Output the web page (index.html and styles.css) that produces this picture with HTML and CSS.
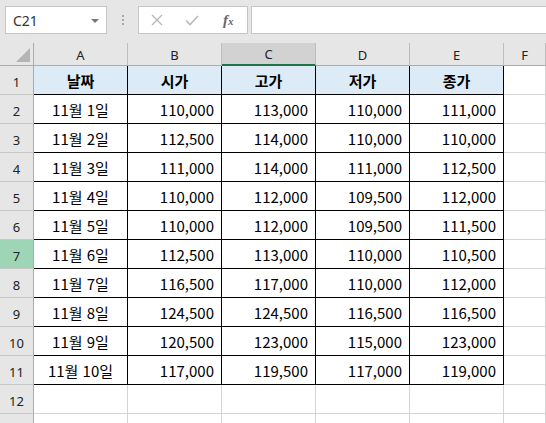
FILE: index.html
```html
<!DOCTYPE html>
<html lang="ko">
<head>
	<meta charset="UTF-8">
	<title>시세</title>
	<link rel="stylesheet" href="styles.css">
</head>
<body>
	<div class="bar">
		<div class="namebox">
			<span>C21</span>
			<span class="arrow"></span>
		</div>
		<div class="dots"><i></i><i></i><i></i></div>
		<div class="btns">
			<svg width="12" height="12" viewBox="0 0 12 12"><path d="M1 1L11 11M11 1L1 11" stroke="#b9b9b9" stroke-width="1.4" fill="none"/></svg>
			<svg width="14" height="11" viewBox="0 0 14 11"><path d="M1 5.5L5 9.5L13 1" stroke="#b9b9b9" stroke-width="1.6" fill="none"/></svg>
			<span class="fx">f<sub>x</sub></span>
		</div>
		<div class="formula"></div>
	</div>

	<div class="sheet">
		<div class="corner"><span class="tri"></span></div>
		<div class="ch">A</div>
		<div class="ch">B</div>
		<div class="ch sel">C</div>
		<div class="ch">D</div>
		<div class="ch">E</div>
		<div class="ch">F</div>

		<div class="rh">1</div>
		<div class="c t h">날짜</div>
		<div class="c t h">시가</div>
		<div class="c t h">고가</div>
		<div class="c t h">저가</div>
		<div class="c t h">종가</div>
		<div class="c"></div>

		<div class="rh">2</div>
		<div class="c t d">11월 1일</div>
		<div class="c t n">110,000</div>
		<div class="c t n">113,000</div>
		<div class="c t n">110,000</div>
		<div class="c t n">111,000</div>
		<div class="c"></div>

		<div class="rh">3</div>
		<div class="c t d">11월 2일</div>
		<div class="c t n">112,500</div>
		<div class="c t n">114,000</div>
		<div class="c t n">110,000</div>
		<div class="c t n">110,000</div>
		<div class="c"></div>

		<div class="rh">4</div>
		<div class="c t d">11월 3일</div>
		<div class="c t n">111,000</div>
		<div class="c t n">114,000</div>
		<div class="c t n">111,000</div>
		<div class="c t n">112,500</div>
		<div class="c"></div>

		<div class="rh">5</div>
		<div class="c t d">11월 4일</div>
		<div class="c t n">110,000</div>
		<div class="c t n">112,000</div>
		<div class="c t n">109,500</div>
		<div class="c t n">112,000</div>
		<div class="c"></div>

		<div class="rh">6</div>
		<div class="c t d">11월 5일</div>
		<div class="c t n">110,000</div>
		<div class="c t n">112,000</div>
		<div class="c t n">109,500</div>
		<div class="c t n">111,500</div>
		<div class="c"></div>

		<div class="rh sel">7</div>
		<div class="c t d">11월 6일</div>
		<div class="c t n">112,500</div>
		<div class="c t n">113,000</div>
		<div class="c t n">110,000</div>
		<div class="c t n">110,500</div>
		<div class="c"></div>

		<div class="rh">8</div>
		<div class="c t d">11월 7일</div>
		<div class="c t n">116,500</div>
		<div class="c t n">117,000</div>
		<div class="c t n">110,000</div>
		<div class="c t n">112,000</div>
		<div class="c"></div>

		<div class="rh">9</div>
		<div class="c t d">11월 8일</div>
		<div class="c t n">124,500</div>
		<div class="c t n">124,500</div>
		<div class="c t n">116,500</div>
		<div class="c t n">116,500</div>
		<div class="c"></div>

		<div class="rh">10</div>
		<div class="c t d">11월 9일</div>
		<div class="c t n">120,500</div>
		<div class="c t n">123,000</div>
		<div class="c t n">115,000</div>
		<div class="c t n">123,000</div>
		<div class="c"></div>

		<div class="rh">11</div>
		<div class="c t d">11월 10일</div>
		<div class="c t n">117,000</div>
		<div class="c t n">119,500</div>
		<div class="c t n">117,000</div>
		<div class="c t n">119,000</div>
		<div class="c"></div>

		<div class="rh">12</div>
		<div class="c"></div>
		<div class="c"></div>
		<div class="c"></div>
		<div class="c"></div>
		<div class="c"></div>
		<div class="c"></div>

		<div class="rh"></div>
		<div class="c"></div>
		<div class="c"></div>
		<div class="c"></div>
		<div class="c"></div>
		<div class="c"></div>
		<div class="c"></div>
	</div>
</body>
</html>
```

FILE: styles.css
```css
* {
	margin: 0;
	padding: 0;
	box-sizing: border-box;
}
html, body {
	width: 546px;
	height: 423px;
	overflow: hidden;
	background: #fff;
}
body {
	font-family: "Noto Sans", "Liberation Sans", sans-serif;
	color: #222;
}

/* formula bar */
.bar {
	height: 43px;
	background: #e6e6e6;
	display: flex;
	align-items: flex-start;
	padding: 6px 0 0 5px;
}
.namebox {
	width: 102px;
	height: 28px;
	background: #fff;
	border: 1px solid #c6c6c6;
	display: flex;
	align-items: center;
	justify-content: space-between;
	padding: 0 7px 0 7px;
	font-size: 14px;
	color: #333;
}
.arrow {
	width: 0;
	height: 0;
	border-left: 4px solid transparent;
	border-right: 4px solid transparent;
	border-top: 4px solid #777;
	margin-top: 1px;
}
.dots {
	width: 31px;
	height: 28px;
	display: flex;
	flex-direction: column;
	align-items: center;
	justify-content: center;
	gap: 2px;
}
.dots i {
	display: block;
	width: 2px;
	height: 2px;
	background: #a8a8a8;
}
.btns {
	width: 110px;
	height: 28px;
	background: #fff;
	border: 1px solid #c6c6c6;
	display: flex;
	align-items: center;
	padding-left: 12px;
	gap: 22px;
}
.fx {
	font-family: "Liberation Serif", serif;
	font-style: italic;
	font-weight: 700;
	font-size: 15px;
	color: #666;
	margin-left: 2px;
}
.fx sub {
	font-size: 11px;
	vertical-align: 0;
}
.formula {
	flex: 1;
	height: 28px;
	margin-left: 3px;
	background: #fff;
	border: 1px solid #c6c6c6;
	border-right: none;
}

/* sheet grid */
.sheet {
	display: grid;
	grid-template-columns: 34px repeat(5, 94px) 1fr;
	grid-template-rows: 23px repeat(12, 29px) 29px;
}
.corner {
	background: #e6e6e6;
	border-right: 1px solid #ababab;
	border-bottom: 1px solid #ababab;
	display: flex;
	justify-content: flex-end;
	align-items: flex-end;
	padding: 0 3px 3px 0;
}
.tri {
	width: 0;
	height: 0;
	border-left: 14px solid transparent;
	border-bottom: 14px solid #b4b4b4;
}
.ch {
	background: #e6e6e6;
	border-right: 1px solid #bdbdbd;
	border-bottom: 1px solid #ababab;
	display: flex;
	align-items: center;
	justify-content: center;
	font-size: 13px;
	padding-top: 1px;
}
.ch.sel {
	background: #d2d2d2;
	border-bottom: 2px solid #217346;
}
.rh {
	background: #e6e6e6;
	border-right: 1px solid #ababab;
	border-bottom: 1px solid #c8c8c8;
	display: flex;
	align-items: flex-end;
	justify-content: center;
	font-size: 13px;
	padding-bottom: 3px;
}
.rh.sel {
	background: #9fd5b7;
}
.c {
	border-right: 1px solid #d4d4d4;
	border-bottom: 1px solid #d4d4d4;
	font-family: "Noto Sans CJK KR", "Noto Sans", sans-serif;
	font-size: 15px;
	color: #000;
	display: flex;
	align-items: center;
}
.t {
	border-right-color: #000;
	border-bottom-color: #000;
}
.h {
	background: #ddebf7;
	font-weight: 700;
	justify-content: center;
}
.d {
	justify-content: center;
}
.n {
	justify-content: flex-end;
	padding-right: 7px;
}
```
